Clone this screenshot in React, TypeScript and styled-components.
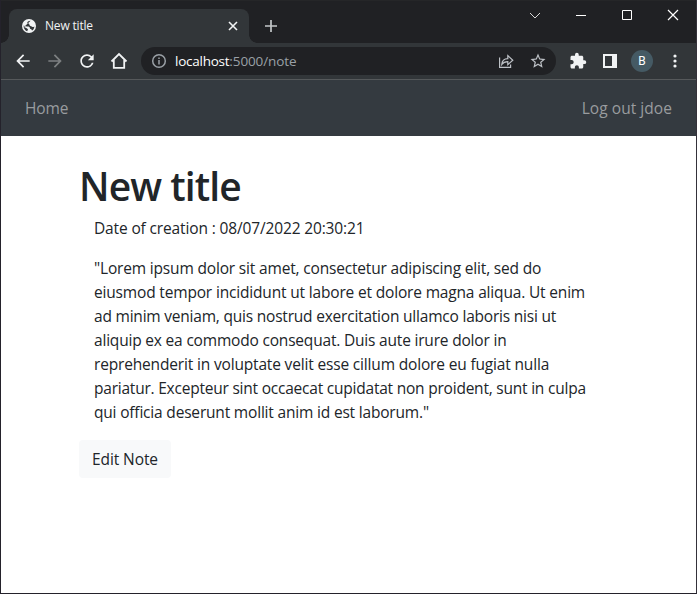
import React from 'react';
import styled, { createGlobalStyle } from 'styled-components';

const GlobalStyle = createGlobalStyle`
  * { box-sizing: border-box; }
  body { margin: 0; background: #fff; font-family: "Open Sans", "Noto Sans", sans-serif; }
  svg { display: block; flex: none; }
  h1, p { margin: 0; }
`;

const Window = styled.div`
  width: 697px;
  height: 594px;
  border: 1px solid #24222b;
  border-top: 0;
  border-right-color: #34313a;
  background: #fff;
  overflow: hidden;
`;

const TabStrip = styled.div`
  height: 43px;
  display: flex;
  align-items: flex-start;
  background: #202124;
  border-top: 1px solid #252628;
`;

const Tab = styled.div`
  position: relative;
  width: 240px;
  height: 34px;
  margin: 8px 0 0 8px;
  padding: 0 10px 0 13px;
  display: flex;
  align-items: center;
  border-radius: 8px 8px 0 0;
  background: #323639;
  color: #f1f3f4;

  &::before, &::after {
    content: "";
    position: absolute;
    bottom: 0;
    width: 8px;
    height: 8px;
  }
  &::before { right: 100%; background: radial-gradient(circle at 0 0, transparent 7.5px, #323639 8px); }
  &::after { left: 100%; background: radial-gradient(circle at 100% 0, transparent 7.5px, #323639 8px); }
`;

const TabTitle = styled.span`
  flex: 1;
  margin-left: 9px;
  font-size: 12px;
  line-height: 16px;
  letter-spacing: -0.18px;
`;

const NewTab = styled.div`
  margin: 19px 0 0 16px;
`;

const WindowControls = styled.div`
  margin: 7px 15px 0 auto;
  display: flex;
  gap: 30px;
`;

const Toolbar = styled.div`
  height: 37px;
  display: flex;
  align-items: center;
  padding: 0 12px 1px 12px;
  background: #323639;
  border-bottom: 1px solid #56595b;
  color: #f1f3f4;
`;

const NavIcons = styled.div`
  display: flex;
  align-items: center;
  gap: 12px;
`;

const AddressBar = styled.div`
  width: 415px;
  height: 28px;
  margin-left: 12px;
  padding: 0 9px 0 10px;
  display: flex;
  align-items: center;
  border-radius: 14px;
  background: #202124;
  color: #9aa0a6;
`;

const Url = styled.span`
  flex: 1;
  margin-left: 8px;
  font-size: 13.5px;
  line-height: 20px;
  letter-spacing: -0.1px;
  b { font-weight: 400; color: #fff; letter-spacing: -0.25px; }
`;

const BarActions = styled.div`
  display: flex;
  gap: 14px;
  color: #bdc1c6;
`;

const Extensions = styled.div`
  display: flex;
  align-items: center;
  margin-left: 13px;
`;

const SidePanelButton = styled.div`
  margin: 0 14px 0 16px;
`;

const Avatar = styled.div`
  width: 22px;
  height: 22px;
  margin-right: 13px;
  border-radius: 50%;
  background: #455a64;
  color: #fff;
  font: 12px/22px Roboto, sans-serif;
  text-align: center;
`;

const Navbar = styled.nav`
  height: 56px;
  padding: 0 24px;
  display: flex;
  align-items: center;
  justify-content: space-between;
  background: #343a40;
`;

const NavLink = styled.a<{ $spacing: number }>`
  color: #999c9f;
  font-size: 15.5px;
  line-height: 24px;
  letter-spacing: ${(p) => p.$spacing}px;
`;

const Note = styled.main`
  padding: 26px 78px 0;
  color: #212529;
`;

const Title = styled.h1`
  font-size: 39px;
  line-height: 48px;
  font-weight: 600;
  letter-spacing: -0.9px;
`;

const Details = styled.div`
  padding: 6px 0 0 15px;
`;

const Body = styled.div`
  margin-top: 16px;
`;

const Line = styled.p<{ $spacing: number }>`
  font-size: 15.5px;
  line-height: 24px;
  white-space: nowrap;
  letter-spacing: ${(p) => p.$spacing}px;
`;

const EditButton = styled.button`
  width: 92px;
  height: 38px;
  margin-top: 16px;
  padding: 0;
  border: 0;
  border-radius: 4px;
  background: #f8f9fa;
  color: #212529;
  font: 15.5px/24px "Open Sans", sans-serif;
  letter-spacing: -0.1px;
`;

const lines: [string, number][] = [
  ['"Lorem ipsum dolor sit amet, consectetur adipiscing elit, sed do', -0.17],
  ['eiusmod tempor incididunt ut labore et dolore magna aliqua. Ut enim', -0.17],
  ['ad minim veniam, quis nostrud exercitation ullamco laboris nisi ut', -0.21],
  ['aliquip ex ea commodo consequat. Duis aute irure dolor in', -0.19],
  ['reprehenderit in voluptate velit esse cillum dolore eu fugiat nulla', -0.165],
  ['pariatur. Excepteur sint occaecat cupidatat non proident, sunt in culpa', -0.22],
  ['qui officia deserunt mollit anim id est laborum."', -0.185],
];

type IconProps = { d: string; size: number; color?: string };

const Solid = ({ d, size, color = 'currentColor' }: IconProps) => (
  <svg width={size} height={size} viewBox="0 0 24 24" fill={color}><path d={d} /></svg>
);

const Stroke = ({ d, size, color = 'currentColor', weight = 1 }: IconProps & { weight?: number }) => (
  <svg width={size} height={size} viewBox={`0 0 ${size} ${size}`} fill="none" stroke={color} strokeWidth={weight}>
    <path d={d} />
  </svg>
);

const ARROW_BACK = 'M20 11H7.83l5.59-5.59L12 4l-8 8 8 8 1.41-1.41L7.83 13H20v-2z';
const ARROW_FORWARD = 'M4 11h12.17l-5.59-5.59L12 4l8 8-8 8-1.41-1.41L16.17 13H4v-2z';
const REFRESH = 'M17.65 6.35A7.958 7.958 0 0 0 12 4c-4.42 0-7.99 3.58-7.99 8s3.57 8 7.99 8c3.73 0 6.84-2.55 7.73-6h-2.08A5.99 5.99 0 0 1 12 18c-3.31 0-6-2.69-6-6s2.69-6 6-6c1.66 0 3.14.69 4.22 1.78L13 11h7V4l-2.35 2.35z';
const PUZZLE = 'M20.5 11H19V7c0-1.1-.9-2-2-2h-4V3.5a2.5 2.5 0 0 0-5 0V5H4c-1.1 0-1.99.9-1.99 2v3.8H3.5c1.49 0 2.7 1.21 2.7 2.7s-1.21 2.7-2.7 2.7H2V20c0 1.1.9 2 2 2h3.8v-1.5c0-1.49 1.21-2.7 2.7-2.7s2.7 1.21 2.7 2.7V22H17c1.1 0 2-.9 2-2v-4h1.5a2.5 2.5 0 0 0 0-5z';
const STAR = 'M22 9.24l-7.19-.62L12 2 9.19 8.63 2 9.24l5.46 4.73L5.82 21 12 17.27 18.18 21l-1.63-7.03L22 9.24zM12 15.4l-3.76 2.27 1-4.28-3.32-2.88 4.38-.38L12 6.1l1.71 4.04 4.38.38-3.32 2.88 1 4.28L12 15.4z';

const Globe = () => (
  <svg width="14" height="14" viewBox="0 0 14 14">
    <circle cx="7" cy="7" r="7" fill="#f1f3f4" />
    <path d="M8.6 1.8C6.4 1.9 5 2.9 5.3 4.3c1 .1 2 .3 2.2 1.6.2 1.1 1.5.8 2.2 1.7.6.8 1.7.4 2.7-.2-.1 1.8-1 3.3-2.4 4.2-.4-1.3-.9-1.7-2-1.9.1-1.8-.9-2.3-2.4-2.3-1.500.1-2.700-.2-4-.9C1.400 9.200 3 11.500 5.200 12.200L6 10.300 4.300 8.900 2 7.900z" fill="#323639" fillRule="evenodd" />
  </svg>
);

const InfoIcon = () => (
  <svg width="16" height="16" viewBox="0 0 16 16" fill="none" stroke="currentColor" strokeWidth="1.5">
    <circle cx="8" cy="8" r="6.3" />
    <path d="M8 7v4.5M8 4.5V6" />
  </svg>
);

const Panel = () => (
  <svg width="14" height="14" viewBox="0 0 14 14" fill="#f1f3f4">
    <path fillRule="evenodd" d="M0 0h14v14H0zM2 2v10h7V2z" />
  </svg>
);

const Dots = () => (
  <svg width="18" height="18" viewBox="0 0 18 18" fill="#f1f3f4">
    <circle cx="9" cy="4" r="1.6" /><circle cx="9" cy="9" r="1.6" /><circle cx="9" cy="14" r="1.6" />
  </svg>
);

export default function App() {
  return (
    <>
      <GlobalStyle />
      <Window>
        <TabStrip>
          <Tab>
            <Globe />
            <TabTitle>New title</TabTitle>
            <Stroke size={12} weight={1.6} d="M2 2l8 8M10 2l-8 8" />
          </Tab>
          <NewTab><Stroke size={12} weight={1.7} color="#c4c7c9" d="M6 0v12M0 6h12" /></NewTab>
          <WindowControls>
            <Stroke size={16} color="#d8d8d8" d="M3 5l5 5 5-5" />
            <Stroke size={16} color="#fff" d="M3 7.5h10" />
            <Stroke size={16} color="#fff" d="M3.5 2.5h9v9h-9z" />
            <Stroke size={16} color="#fff" weight={1.2} d="M3 2l10 10M13 2L3 12" />
          </WindowControls>
        </TabStrip>
        <Toolbar>
          <NavIcons>
            <Solid size={20} d={ARROW_BACK} />
            <Solid size={20} color="#7d8082" d={ARROW_FORWARD} />
            <Solid size={20} d={REFRESH} />
            <Stroke size={20} weight={1.8} d="M2.5 10.5L10 3l7.5 7.5M4.8 9v7.8h10.4V9" />
          </NavIcons>
          <AddressBar>
            <InfoIcon />
            <Url><b>localhost</b>:5000/note</Url>
            <BarActions>
              <Stroke size={18} weight={1.2} d="M2.600 5.500v9.900h11v-3M4.800 12.400c.3-3.800 2.400-5.600 6-5.700V3.600l5 4.700-5 4.400V9.600c-2.800 0-4.600.8-6 2.800z" />
              <Solid size={18} d={STAR} />
            </BarActions>
          </AddressBar>
          <Extensions>
            <Solid size={18} d={PUZZLE} />
            <SidePanelButton><Panel /></SidePanelButton>
            <Avatar>B</Avatar>
            <Dots />
          </Extensions>
        </Toolbar>
        <Navbar>
          <NavLink $spacing={-0.15}>Home</NavLink>
          <NavLink $spacing={0.05}>Log out jdoe</NavLink>
        </Navbar>
        <Note>
          <Title>New title</Title>
          <Details>
            <Line $spacing={-0.14}>Date of creation : 08/07/2022 20:30:21</Line>
            <Body>
              {lines.map(([text, spacing]) => <Line key={text} $spacing={spacing}>{text}</Line>)}
            </Body>
          </Details>
          <EditButton>Edit Note</EditButton>
        </Note>
      </Window>
    </>
  );
}
